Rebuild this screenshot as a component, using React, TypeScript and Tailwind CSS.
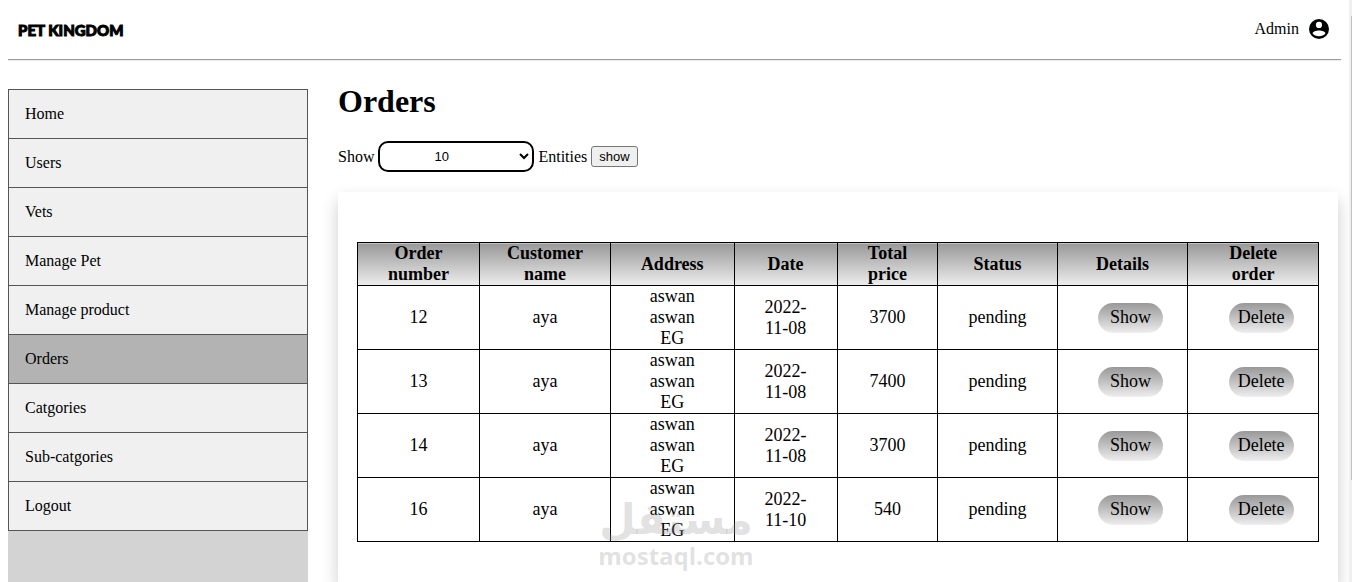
import React from 'react';

type NavItem = { name: string; href: string };
type Order = { id: number; customer: string; address: string[]; date: string; total: number; status: string };

const navItems: NavItem[] = [
  { name: 'Home', href: '#home' },
  { name: 'Users', href: '#users' },
  { name: 'Vets', href: '#vets' },
  { name: 'Manage Pet', href: '#pets' },
  { name: 'Manage product', href: '#products' },
  { name: 'Orders', href: '#orders' },
  { name: 'Catgories', href: '#categories' },
  { name: 'Sub-catgories', href: '#sub-categories' },
  { name: 'Logout', href: '#logout' },
];

const orders: Order[] = [
  { id: 12, customer: 'aya', address: ['aswan', 'aswan', 'EG'], date: '2022-11-08', total: 3700, status: 'pending' },
  { id: 13, customer: 'aya', address: ['aswan', 'aswan', 'EG'], date: '2022-11-08', total: 7400, status: 'pending' },
  { id: 14, customer: 'aya', address: ['aswan', 'aswan', 'EG'], date: '2022-11-08', total: 3700, status: 'pending' },
  { id: 16, customer: 'aya', address: ['aswan', 'aswan', 'EG'], date: '2022-11-10', total: 540, status: 'pending' },
];

const columns = [
  { title: 'Order number', width: 'w-[12.7%]' },
  { title: 'Customer name', width: 'w-[13.6%]' },
  { title: 'Address', width: 'w-[12.9%]' },
  { title: 'Date', width: 'w-[10.7%]' },
  { title: 'Total price', width: 'w-[10.5%]' },
  { title: 'Status', width: 'w-[12.4%]' },
  { title: 'Details', width: 'w-[13.6%]' },
  { title: 'Delete order', width: 'w-[13.6%]' },
];

const AccountIcon: React.FC = () => (
  <svg className="h-6 w-6" viewBox="0 0 24 24" aria-hidden="true">
    <circle cx="12" cy="12" r="10" fill="currentColor" />
    <circle cx="12" cy="7.9" r="3.1" fill="white" />
    <path d="M5.6 16.4c0-1.7 3.4-2.9 6.4-2.9s6.4 1.2 6.4 2.9c-1.5 1.7-3.700 2.800-6.400 2.800s-4.900-1.100-6.400-2.800z" fill="white" />
  </svg>
);

const Header: React.FC = () => (
  <header className="flex h-[61px] shrink-0 items-center justify-between border-b border-[#eee] px-[10px] shadow-[inset_0_-1px_0_#9a9a9a]">
    <a href="#home" className="font-['Lato',sans-serif] text-[15px] font-black [-webkit-text-stroke:1px_black]">
      PET KINGDOM
    </a>
    <a href="#account" className="flex items-center gap-2 pb-0.5">
      Admin
      <AccountIcon />
    </a>
  </header>
);

const SideNav: React.FC<{ active: string }> = ({ active }) => (
  <nav className="mt-7 w-[300px] shrink-0 bg-[#d3d3d3]">
    <ul className="border border-[#555]">
      {navItems.map((item) => (
        <li key={item.name} className="border-b border-[#555] last:border-b-0">
          <a
            href={item.href}
            className={`block px-4 py-3 leading-6 ${active === item.name ? 'bg-[#b3b3b3]' : 'bg-[#f0f0f0] hover:bg-[#b3b3b3]'}`}
          >
            {item.name}
          </a>
        </li>
      ))}
    </ul>
  </nav>
);

const ActionButton: React.FC<{ label: string }> = ({ label }) => (
  <button type="button" className="ml-4 h-[30px] w-[65px] rounded-[15px] bg-linear-to-b from-[#999] to-[#eee] align-middle">
    {label}
  </button>
);

const OrdersTable: React.FC = () => (
  <table className="w-full table-fixed border-collapse text-center text-[18px] leading-[21px]">
    <thead>
      <tr>
        {columns.map((col) => (
          <th key={col.title} className={`border border-black bg-linear-to-b from-[#999] to-[#eee] px-5 ${col.width}`}>
            {col.title}
          </th>
        ))}
      </tr>
    </thead>
    <tbody>
      {orders.map((order) => (
        <tr key={order.id}>
          <td className="border border-black">{order.id}</td>
          <td className="border border-black">{order.customer}</td>
          <td className="border border-black">
            {order.address.map((line, i) => (
              <div key={i}>{line}</div>
            ))}
          </td>
          <td className="border border-black px-5">{order.date}</td>
          <td className="border border-black">{order.total}</td>
          <td className="border border-black">{order.status}</td>
          <td className="border border-black">
            <ActionButton label="Show" />
          </td>
          <td className="border border-black">
            <ActionButton label="Delete" />
          </td>
        </tr>
      ))}
    </tbody>
  </table>
);

// Sits above the page, centred on the bottom edge
const Watermark: React.FC = () => (
  <div className="pointer-events-none absolute inset-x-0 bottom-3 flex flex-col items-center text-[#999]/30">
    <span lang="ar" dir="rtl" className="font-['DejaVu_Sans',sans-serif] text-[42px] font-bold leading-[44px]">
      مستقل
    </span>
    <span className="font-['Open_Sans',sans-serif] text-[24px] font-bold leading-7">mostaql.com</span>
  </div>
);

export default function App() {
  return (
    <div className="relative flex h-screen overflow-hidden bg-white font-['Liberation_Serif',serif] text-base text-black">
      <div className="flex min-w-0 flex-1 flex-col px-2">
        <Header />
        <div className="flex flex-1 gap-[30px]">
          <SideNav active="Orders" />
          <main className="mr-[3px] flex min-w-0 flex-1 flex-col pt-[22px]">
            <h1 className="text-[32px] font-bold leading-9">Orders</h1>
            <form className="mt-[22px] flex items-center gap-1" onSubmit={(e) => e.preventDefault()}>
              <label htmlFor="entities">Show</label>
              <select
                id="entities"
                defaultValue="10"
                className="h-[31px] w-[156px] rounded-[10px] border-2 border-black bg-white pl-[50px] font-['Liberation_Sans',sans-serif] text-[13px]"
              >
                <option>10</option>
                <option>25</option>
                <option>50</option>
              </select>
              <span>Entities</span>
              <button
                type="submit"
                className="h-[21px] rounded-[3px] border border-[#767676] bg-[#efefef] px-[7px] font-['Liberation_Sans',sans-serif] text-[13px] leading-4"
              >
                show
              </button>
            </form>
            <section className="mt-5 flex-1 bg-white px-[19px] pt-[50px] shadow-[0_8px_16px_0_rgba(0,0,0,0.2)]">
              <OrdersTable />
            </section>
          </main>
        </div>
      </div>
      <div className="z-10 w-[3px] shrink-0 bg-[#f0f0f0] pt-4">
        <div className="ml-auto h-[82%] w-px bg-[#c1c1c1]" />
      </div>
      <Watermark />
    </div>
  );
}
